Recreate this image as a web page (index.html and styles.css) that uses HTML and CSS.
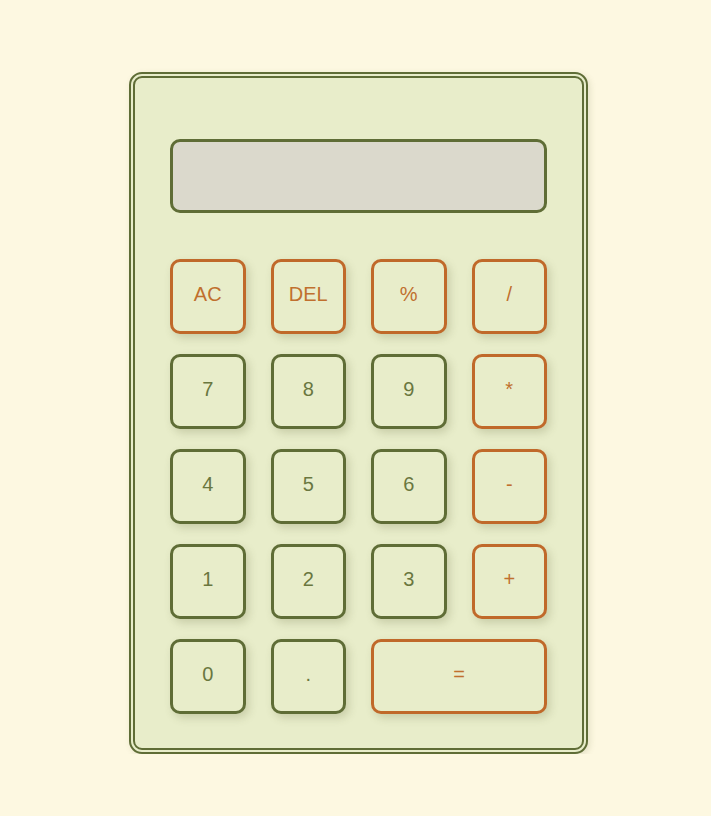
FILE: index.html
```html
<!DOCTYPE html>
<html>
<head>
<meta charset="utf-8">
<link rel="stylesheet" href="styles.css">
</head>
<body>
<div class="calculator">
  <div class="display"></div>
  <div class="keys">
    <button class="key op">AC</button>
    <button class="key op">DEL</button>
    <button class="key op">%</button>
    <button class="key op">/</button>
    <button class="key">7</button>
    <button class="key">8</button>
    <button class="key">9</button>
    <button class="key op">*</button>
    <button class="key">4</button>
    <button class="key">5</button>
    <button class="key">6</button>
    <button class="key op">-</button>
    <button class="key">1</button>
    <button class="key">2</button>
    <button class="key">3</button>
    <button class="key op">+</button>
    <button class="key">0</button>
    <button class="key">.</button>
    <button class="key op wide">=</button>
  </div>
</div>
</body>
</html>
```
FILE: styles.css
```css
html, body {
  margin: 0;
  padding: 0;
}
body {
  background: #fdf8e1;
  font-family: "Liberation Sans", Arial, sans-serif;
  padding-top: 72px;
}
.calculator {
  box-sizing: border-box;
  width: 459px;
  height: 682px;
  margin-left: 129px;
  background: #e8edca;
  border: 6px double #5f6d36;
  border-radius: 13px;
  padding: 61px 35px 34px 35px;
  box-shadow: 2px 2px 6px rgba(90, 100, 50, 0.15);
}
.display {
  box-sizing: border-box;
  height: 74px;
  background: #dbd9cc;
  border: 3px solid #5f6d36;
  border-radius: 10px;
  margin-bottom: 46px;
}
.keys {
  display: grid;
  grid-template-columns: repeat(4, 1fr);
  grid-auto-rows: 75px;
  column-gap: 25px;
  row-gap: 20px;
}
.key {
  box-sizing: border-box;
  background: #e8edca;
  border: 3px solid #5f6d36;
  border-radius: 10px;
  color: #6a773f;
  font-family: "Liberation Sans", Arial, sans-serif;
  font-size: 20px;
  padding: 0 0 5px 0;
  box-shadow: 3px 4px 8px rgba(90, 95, 50, 0.22);
}
.key.op {
  border-color: #c0692a;
  color: #c0702e;
}
.key.wide {
  grid-column: span 2;
}
```
